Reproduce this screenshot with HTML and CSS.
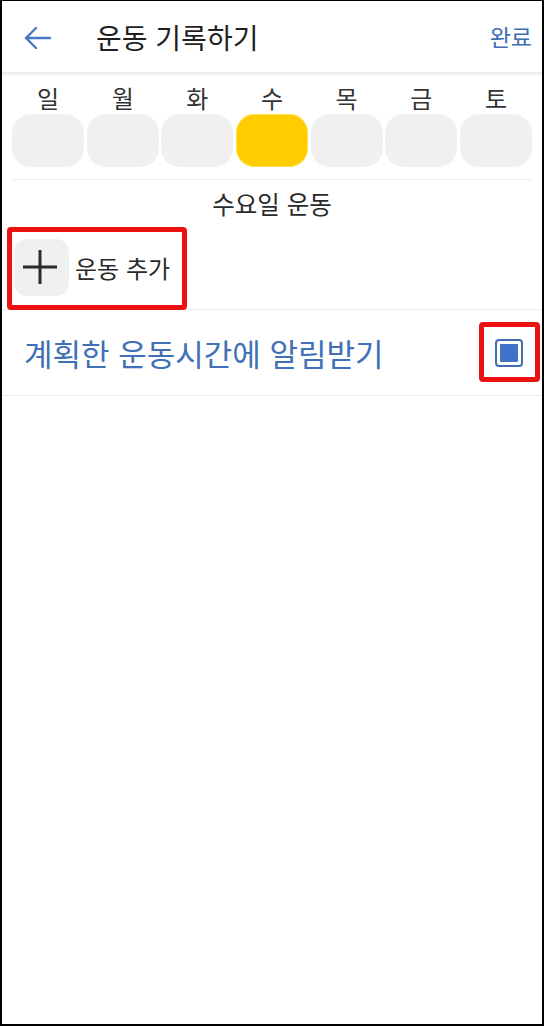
FILE: index.html
```html
<!DOCTYPE html>
<html lang="ko">
<head>
<meta charset="utf-8">
<link rel="stylesheet" href="styles.css">
</head>
<body>
<div class="frame">
  <header class="header">
    <svg class="back" width="28" height="22" viewBox="0 0 28 22">
      <path d="M2 11 H26 M12 1 L2 11 L12 21" fill="none" stroke="#4a78c2" stroke-width="2.4" stroke-linecap="round" stroke-linejoin="round"/>
    </svg>
    <div class="title">운동 기록하기</div>
    <div class="done">완료</div>
  </header>

  <div class="week">
    <div class="labels">
      <span>일</span><span>월</span><span>화</span><span>수</span><span>목</span><span>금</span><span>토</span>
    </div>
    <div class="pills">
      <div class="pill"></div><div class="pill"></div><div class="pill"></div><div class="pill on"></div><div class="pill"></div><div class="pill"></div><div class="pill"></div>
    </div>
  </div>

  <div class="dayname">수요일 운동</div>

  <div class="addrow">
    <div class="plusbox">
      <svg width="36" height="36" viewBox="0 0 36 36"><path d="M18 1 V35 M1 18 H35" stroke="#2b2b2b" stroke-width="3"/></svg>
    </div>
    <span class="addtext">운동 추가</span>
    <div class="mark mark-add"></div>
  </div>

  <div class="notify">
    <span class="notifytext">계획한 운동시간에 알림받기</span>
    <div class="check"><div class="checkinner"></div></div>
    <div class="mark mark-check"></div>
  </div>
</div>
</body>
</html>
```
FILE: styles.css
```css
html, body {
  margin: 0;
  padding: 0;
  background: #fff;
}
body {
  width: 544px;
  height: 1026px;
  overflow: hidden;
  font-family: "Noto Sans CJK KR", "Noto Sans", sans-serif;
}
.frame {
  width: 544px;
  height: 1026px;
  box-sizing: border-box;
  border: 2px solid #000;
  border-top-width: 1px;
  background: #fff;
}
.header {
  height: 71px;
  display: flex;
  align-items: center;
  padding: 0 10px 0 22px;
  box-shadow: 0 2px 3px rgba(0,0,0,0.08);
  border-bottom: 1px solid #ececec;
  position: relative;
}
.back {
  display: block;
  margin-top: 2px;
}
.title {
  margin-left: 44px;
  font-size: 28px;
  color: #1f1f1f;
  flex: 1;
  line-height: 1;
}
.done {
  font-size: 23px;
  color: #3e6db3;
  line-height: 1;
}
.week {
  padding: 11px 10px 0 10px;
}
.labels {
  display: grid;
  grid-template-columns: repeat(7, 1fr);
  gap: 2.5px;
  text-align: center;
  font-size: 24px;
  color: #333;
  line-height: 28px;
  height: 28px;
}
.pills {
  display: grid;
  grid-template-columns: repeat(7, 1fr);
  gap: 2.5px;
  margin-top: 2px;
  padding-bottom: 12px;
  border-bottom: 1px solid #eeeeee;
}
.pill {
  height: 53px;
  border-radius: 19px;
  background: #f0f0f0;
}
.pill.on {
  background: #ffcc00;
  box-shadow: 0 0 0 1px #ffe14d inset;
}
.dayname {
  text-align: center;
  font-size: 24.5px;
  color: #2a2a2a;
  line-height: 30px;
  padding-top: 9px;
}
.addrow {
  position: relative;
  display: flex;
  align-items: center;
  height: 91px;
  padding-left: 12px;
  padding-top: 6px;
  border-bottom: 1px solid #ececec;
  box-sizing: border-box;
}
.plusbox {
  width: 55px;
  height: 57px;
  border-radius: 13px;
  background: #f0f0f0;
  display: flex;
  align-items: center;
  justify-content: center;
}
.plusbox svg { margin-left: -3px; }
.addtext {
  margin-left: 6px;
  font-size: 24px;
  color: #2a2a2a;
}
.mark {
  position: absolute;
  border: 5px solid #ee1111;
  border-radius: 4px;
  box-sizing: border-box;
}
.mark-add {
  left: 5px;
  top: 8px;
  width: 180px;
  height: 83px;
}
.notify {
  position: relative;
  display: flex;
  align-items: center;
  height: 85px;
  padding: 0 22px 0 22px;
  border-bottom: 1px solid #ececec;
}
.notifytext {
  flex: 1;
  font-size: 31px;
  color: #4070b6;
}
.check {
  width: 28px;
  height: 28px;
  box-sizing: border-box;
  border: 2px solid #3e6db3;
  border-radius: 4px;
  display: flex;
  align-items: center;
  justify-content: center;
  margin-right: -3px;
}
.checkinner {
  width: 18px;
  height: 18px;
  background: #3f72c8;
  border-radius: 1px;
}
.mark-check {
  left: 477px;
  top: 12px;
  width: 61px;
  height: 60px;
}
```
